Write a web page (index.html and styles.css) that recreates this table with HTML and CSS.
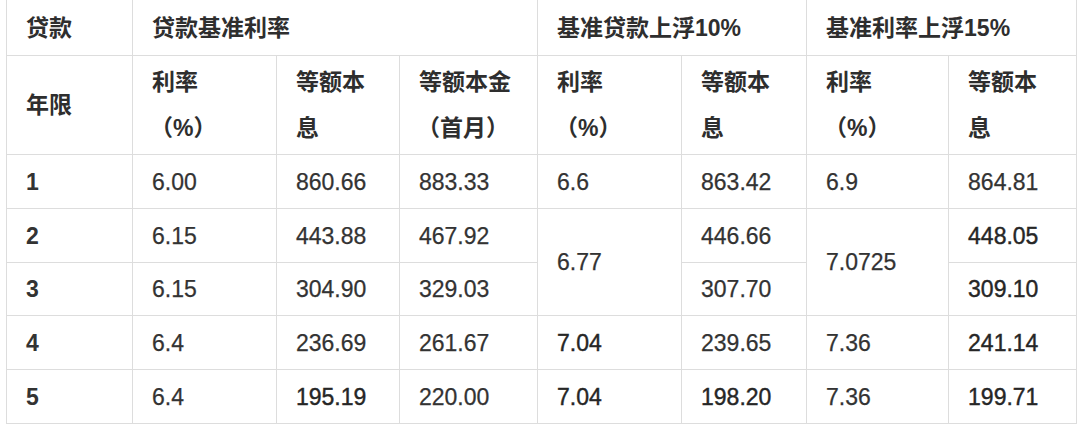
FILE: index.html
```html
<!DOCTYPE html>
<html lang="zh-CN">
<head>
<meta charset="utf-8">
<title>贷款利率表</title>
<link rel="stylesheet" href="styles.css">
</head>
<body>
<div class="wrap">
<table class="rates">
  <colgroup>
    <col class="c1"><col class="c2"><col class="c3"><col class="c4">
    <col class="c5"><col class="c6"><col class="c7"><col class="c8">
  </colgroup>
  <tr class="h1">
    <th>贷款</th>
    <th colspan="3">贷款基准利率</th>
    <th colspan="2">基准贷款上浮10%</th>
    <th colspan="2">基准利率上浮15%</th>
  </tr>
  <tr class="h2">
    <th>年限</th>
    <th>利率<br><span class="pct">（%）</span></th>
    <th>等额本<br>息</th>
    <th>等额本金<br><span class="pct">（首月）</span></th>
    <th>利率<br><span class="pct">（%）</span></th>
    <th>等额本<br>息</th>
    <th>利率<br><span class="pct">（%）</span></th>
    <th>等额本<br>息</th>
  </tr>
  <tr class="r r1">
    <td class="yr">1</td><td>6.00</td><td>860.66</td><td>883.33</td>
    <td>6.6</td><td>863.42</td><td>6.9</td><td>864.81</td>
  </tr>
  <tr class="r r2">
    <td class="yr">2</td><td>6.15</td><td>443.88</td><td>467.92</td>
    <td rowspan="2">6.77</td><td>446.66</td><td rowspan="2">7.0725</td><td class="b">448.05</td>
  </tr>
  <tr class="r r3">
    <td class="yr">3</td><td>6.15</td><td>304.90</td><td>329.03</td>
    <td>307.70</td><td class="b">309.10</td>
  </tr>
  <tr class="r r4">
    <td class="yr">4</td><td>6.4</td><td>236.69</td><td>261.67</td>
    <td class="b">7.04</td><td>239.65</td><td>7.36</td><td class="b">241.14</td>
  </tr>
  <tr class="r r5">
    <td class="yr">5</td><td>6.4</td><td class="b">195.19</td><td>220.00</td>
    <td class="b">7.04</td><td class="b">198.20</td><td>7.36</td><td class="b">199.71</td>
  </tr>
</table>
</div>
</body>
</html>
```
FILE: styles.css
```css
html, body {
  margin: 0;
  padding: 0;
  background: #ffffff;
}
.wrap {
  padding: 0 0 0 6px;
}
.rates {
  border-collapse: collapse;
  table-layout: fixed;
  width: 1070px;
  font-family: "Liberation Sans", "Noto Sans CJK SC", sans-serif;
  font-size: 23px;
  color: #333333;
}
.c1 { width: 126px; }
.c2 { width: 144px; }
.c3 { width: 123px; }
.c4 { width: 138px; }
.c5 { width: 144px; }
.c6 { width: 125px; }
.c7 { width: 142px; }
.c8 { width: 128px; }
.rates th,
.rates td {
  border: 1px solid #dddddd;
  padding: 0 0 0 19px;
  text-align: left;
  vertical-align: middle;
  white-space: nowrap;
  overflow: hidden;
}
.rates th {
  font-weight: bold;
  color: #2e2e2e;
}
.h1 th {
  border-top: none;
  height: 55px;
  line-height: 26px;
}
.h2 th {
  height: 98px;
  line-height: 46px;
}
.pct {
  display: inline-block;
  margin-left: -2px;
}
.r td {
  height: 53px;
  line-height: 26px;
  -webkit-text-stroke: 0.25px #333333;
}
.r3 td { height: 52px; }
.rates .yr {
  font-weight: bold;
  -webkit-text-stroke: 0;
}
.rates .b {
  color: #262626;
  -webkit-text-stroke: 0.4px #262626;
}
```
